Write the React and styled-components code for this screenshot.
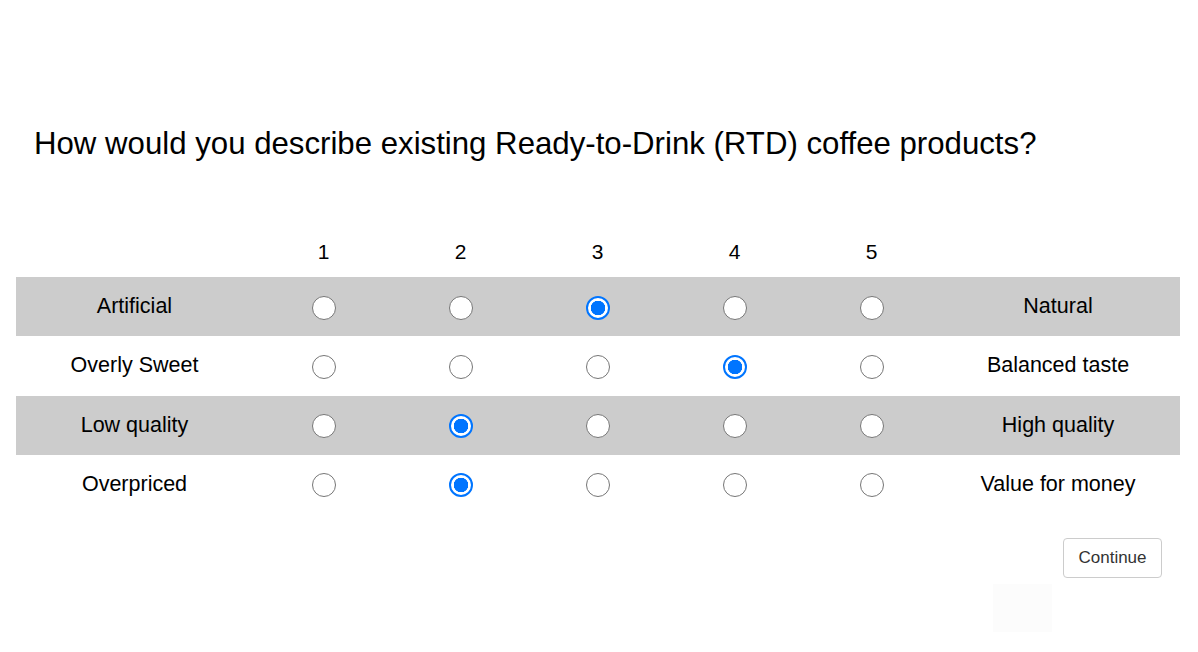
import React, { useState } from 'react'
import styled, { createGlobalStyle } from 'styled-components'

const GlobalStyle = createGlobalStyle`
  body {
    margin: 0;
    background: #fff;
    font-family: "Liberation Sans", Arial, sans-serif;
    color: #000;
  }
`

const Page = styled.div`
  padding: 0 18px 0 16px;
`

const Title = styled.h1`
  margin: 126px 0 0 18px;
  font-size: 31.2px;
  line-height: 36px;
  font-weight: normal;
`

const Scale = styled.div`
  margin-top: 70px;
  display: grid;
  grid-template-columns: 239px repeat(5, 137px) 1fr;
`

const HeaderRow = styled.div`
  display: contents;
`

const HeaderCell = styled.div`
  height: 40px;
  padding-bottom: 5px;
  display: flex;
  align-items: center;
  justify-content: center;
  font-size: 21px;
`

const Cell = styled.div`
  height: 59.25px;
  display: flex;
  align-items: center;
  justify-content: center;
  font-size: 21.5px;
  padding-right: ${({ shift }) => (shift ? `${shift}px` : '0')};
  background: ${({ shaded }) => (shaded ? '#cccccc' : '#fff')};
`

const Radio = styled.input.attrs({ type: 'radio' })`
  appearance: none;
  margin: 2px 0 0;
  width: 24px;
  height: 24px;
  border-radius: 50%;
  border: 1px solid #767676;
  background: #fff;
  cursor: pointer;

  &:checked {
    border: 2px solid #0075ff;
    background: radial-gradient(circle, #0075ff 0 7px, #fff 7.5px);
  }
`

const Footer = styled.div`
  display: flex;
  flex-direction: column;
  align-items: flex-end;
  margin: 24px 18px 0 0;
`

const ContinueButton = styled.button`
  width: 99px;
  height: 40px;
  border: 1px solid #cccccc;
  border-radius: 4px;
  background: #fff;
  color: #333;
  font-family: "Liberation Sans", Arial, sans-serif;
  font-size: 17px;
  cursor: pointer;
`

const Ghost = styled.div`
  width: 59px;
  height: 48px;
  margin: 6px 110px 0 0;
  background: #fcfcfc;
`

const rows = [
  { left: 'Artificial', right: 'Natural', value: 3 },
  { left: 'Overly Sweet', right: 'Balanced taste', value: 4 },
  { left: 'Low quality', right: 'High quality', value: 2 },
  { left: 'Overpriced', right: 'Value for money', value: 2 },
]

const points = [1, 2, 3, 4, 5]

export default function App() {
  const [answers, setAnswers] = useState(rows.map((r) => r.value))

  const pick = (row, value) => {
    setAnswers((prev) => prev.map((v, i) => (i === row ? value : v)))
  }

  return (
    <Page>
      <GlobalStyle />
      <Title>How would you describe existing Ready-to-Drink (RTD) coffee products?</Title>
      <Scale>
        <HeaderRow>
          <HeaderCell />
          {points.map((p) => (
            <HeaderCell key={p}>{p}</HeaderCell>
          ))}
          <HeaderCell />
        </HeaderRow>
        {rows.map((row, i) => (
          <React.Fragment key={row.left}>
            <Cell shaded={i % 2 === 0} shift={2}>
              {row.left}
            </Cell>
            {points.map((p) => (
              <Cell key={p} shaded={i % 2 === 0}>
                <Radio
                  name={`row-${i}`}
                  checked={answers[i] === p}
                  onChange={() => pick(i, p)}
                />
              </Cell>
            ))}
            <Cell shaded={i % 2 === 0} shift={4}>
              {row.right}
            </Cell>
          </React.Fragment>
        ))}
      </Scale>
      <Footer>
        <ContinueButton type="button">Continue</ContinueButton>
        <Ghost />
      </Footer>
    </Page>
  )
}
